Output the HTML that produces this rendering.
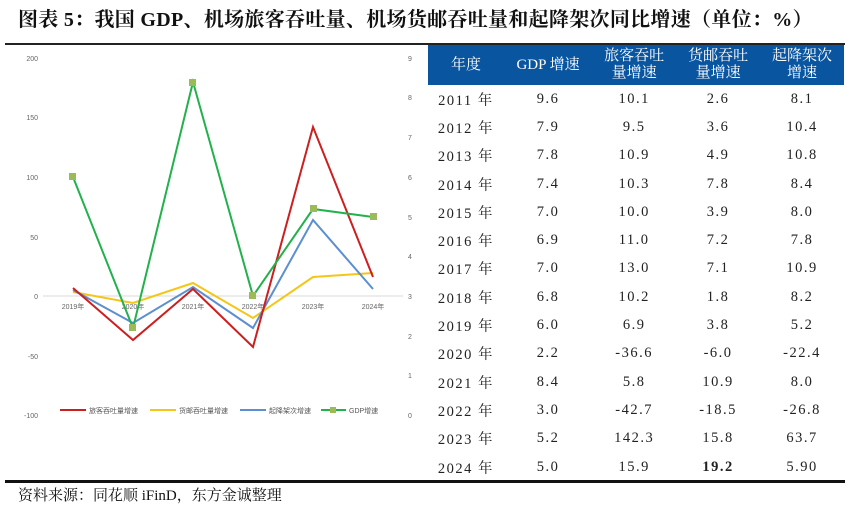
<!DOCTYPE html>
<html><head><meta charset="utf-8"><style>
body{margin:0;width:850px;height:505px;background:#fff;position:relative;overflow:hidden;font-family:"Liberation Serif","Noto Serif CJK SC",serif}
.t{position:absolute;left:18px;top:3px;font-size:20px;font-weight:bold;color:#111;letter-spacing:0.3px;white-space:nowrap}
.l1{position:absolute;left:5px;top:43px;width:840px;height:2px;background:#222}
.l2{position:absolute;left:5px;top:480px;width:840px;height:3px;background:#111}
.src{position:absolute;left:18px;top:484px;font-size:15px;color:#111}
table{position:absolute;left:428px;top:45px;width:416px;border-collapse:collapse;font-size:14.5px;color:#222}
th{background:#0a55a0;color:#fff;font-weight:normal;height:38px;line-height:17px;font-size:15px}
td{text-align:center;height:28.3px;padding:0;letter-spacing:1.5px}
</style></head><body>
<div class="t">图表 5：我国 GDP、机场旅客吞吐量、机场货邮吞吐量和起降架次同比增速（单位：%）</div>
<div class="l1"></div>
<svg style="position:absolute;left:0;top:0" width="428" height="480" font-family="Liberation Sans,Noto Sans CJK SC,sans-serif">
<g font-size="7" fill="#666" text-anchor="end">
<text x="38" y="61">200</text><text x="38" y="120">150</text><text x="38" y="180">100</text><text x="38" y="240">50</text><text x="38" y="299">0</text><text x="38" y="359">-50</text><text x="38" y="418">-100</text>
</g>
<g font-size="7" fill="#666">
<text x="408" y="61">9</text><text x="408" y="100">8</text><text x="408" y="140">7</text><text x="408" y="180">6</text><text x="408" y="220">5</text><text x="408" y="259">4</text><text x="408" y="299">3</text><text x="408" y="339">2</text><text x="408" y="378">1</text><text x="408" y="418">0</text>
</g>
<line x1="43" y1="296" x2="403" y2="296" stroke="#d9d9d9" stroke-width="1"/>
<g font-size="7" fill="#666" text-anchor="middle">
<text x="73" y="309">2019年</text><text x="133" y="309">2020年</text><text x="193" y="309">2021年</text><text x="253" y="309">2022年</text><text x="313" y="309">2023年</text><text x="373" y="309">2024年</text>
</g>
<g fill="none" stroke-width="2">
<polyline stroke="#f5c518" points="73,292 133,303 193,283 253,318 313,277 373,273"/>
<polyline stroke="#5b8fd0" points="73,290 133,323 193,287 253,328 313,220 373,289"/>
<polyline stroke="#cc1f1f" points="73,288 133,340 193,289 253,347 313,127 373,277"/>
<polyline stroke="#22b14c" points="73,177 133,328 193,82 253,296 313,209 373,217"/>
</g>
<g fill="#9bbb59">
<rect x="69" y="173" width="7" height="7"/><rect x="129" y="324" width="7" height="7"/><rect x="189" y="79" width="7" height="7"/><rect x="249" y="292" width="7" height="7"/><rect x="310" y="205" width="7" height="7"/><rect x="370" y="213" width="7" height="7"/>
</g>
<g stroke-width="2">
<line x1="60" y1="410" x2="86" y2="410" stroke="#cc1f1f"/>
<line x1="150" y1="410" x2="176" y2="410" stroke="#f5c518"/>
<line x1="240" y1="410" x2="266" y2="410" stroke="#5b8fd0"/>
<line x1="321" y1="410" x2="346" y2="410" stroke="#22b14c"/>
</g>
<rect x="330" y="407" width="6" height="6" fill="#9bbb59"/>
<g font-size="7" fill="#555">
<text x="89" y="413">旅客吞吐量增速</text><text x="179" y="413">货邮吞吐量增速</text><text x="269" y="413">起降架次增速</text><text x="349" y="413">GDP增速</text>
</g>
</svg>
<table>
<tr><th>年度</th><th>GDP 增速</th><th>旅客吞吐<br>量增速</th><th>货邮吞吐<br>量增速</th><th>起降架次<br>增速</th></tr>
<tr><td>2011 年</td><td>9.6</td><td>10.1</td><td>2.6</td><td>8.1</td></tr>
<tr><td>2012 年</td><td>7.9</td><td>9.5</td><td>3.6</td><td>10.4</td></tr>
<tr><td>2013 年</td><td>7.8</td><td>10.9</td><td>4.9</td><td>10.8</td></tr>
<tr><td>2014 年</td><td>7.4</td><td>10.3</td><td>7.8</td><td>8.4</td></tr>
<tr><td>2015 年</td><td>7.0</td><td>10.0</td><td>3.9</td><td>8.0</td></tr>
<tr><td>2016 年</td><td>6.9</td><td>11.0</td><td>7.2</td><td>7.8</td></tr>
<tr><td>2017 年</td><td>7.0</td><td>13.0</td><td>7.1</td><td>10.9</td></tr>
<tr><td>2018 年</td><td>6.8</td><td>10.2</td><td>1.8</td><td>8.2</td></tr>
<tr><td>2019 年</td><td>6.0</td><td>6.9</td><td>3.8</td><td>5.2</td></tr>
<tr><td>2020 年</td><td>2.2</td><td>-36.6</td><td>-6.0</td><td>-22.4</td></tr>
<tr><td>2021 年</td><td>8.4</td><td>5.8</td><td>10.9</td><td>8.0</td></tr>
<tr><td>2022 年</td><td>3.0</td><td>-42.7</td><td>-18.5</td><td>-26.8</td></tr>
<tr><td>2023 年</td><td>5.2</td><td>142.3</td><td>15.8</td><td>63.7</td></tr>
<tr><td>2024 年</td><td>5.0</td><td>15.9</td><td><b>19.2</b></td><td>5.90</td></tr>
</table>
<div class="l2"></div>
<div class="src">资料来源：同花顺 iFinD，东方金诚整理</div>
</body></html>
